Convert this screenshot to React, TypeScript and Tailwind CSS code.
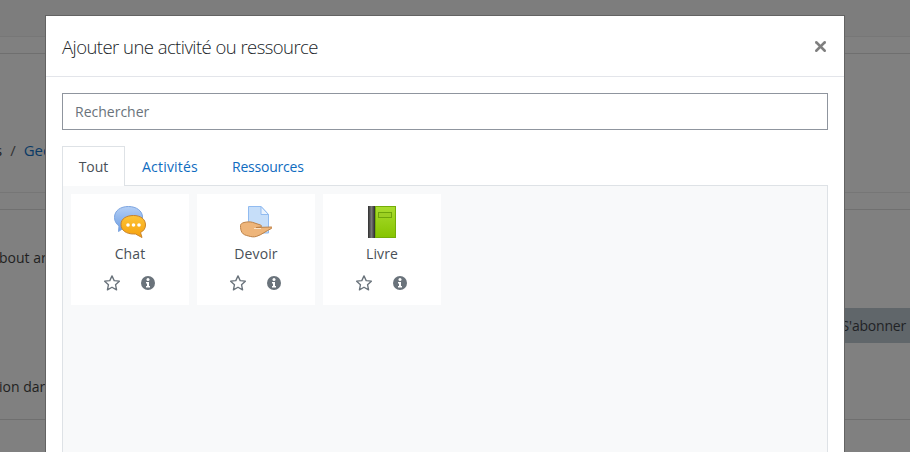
import React from "react";
import { X } from "lucide-react";

const font = { fontFamily: '"Open Sans", "Noto Sans", sans-serif' };

function ChatIcon() {
  return (
    <svg width="32" height="32" viewBox="0 0 32 32">
      <defs>
        <linearGradient id="chatBlue" x1="0" y1="0" x2="0" y2="1">
          <stop offset="0" stopColor="#b4cff5" />
          <stop offset="1" stopColor="#6c9de3" />
        </linearGradient>
        <linearGradient id="chatOrange" x1="0" y1="0" x2="0" y2="1">
          <stop offset="0" stopColor="#fdc437" />
          <stop offset="1" stopColor="#f6a00c" />
        </linearGradient>
      </defs>
      <path d="M14.500.5C6.500.5.500 4.500.500 11.500c0 4 2 6.500 4.500 8.500l-.5 5.500 6-4h5c7 0 13-4.500 13-10.500S22.500.5 14.500.5z" fill="url(#chatBlue)" stroke="#7da5e0" />
      <path d="M19.500 9.500c-7 0-12.500 3-12.500 9s5.500 9.500 12.500 9.500h2l6.500 3.500-1.500-5c3-1.500 5-4 5-7.500 0-6-5-9.500-12-9.500z" fill="url(#chatOrange)" stroke="#c8832c" />
      <circle cx="14" cy="19" r="1.800" fill="#fff" />
      <circle cx="19.500" cy="19" r="1.800" fill="#fff" />
      <circle cx="25" cy="19" r="1.800" fill="#fff" />
    </svg>
  );
}

function DevoirIcon() {
  return (
    <svg width="32" height="32" viewBox="0 0 32 32">
      <path d="M8.500.5H21l7.500 8V27h-20z" fill="#c6def9" stroke="#91bbf0" />
      <path d="M21 .5v8h7.500z" fill="#eaf3fe" stroke="#91bbf0" />
      <path d="M.5 19.500c0-1.500 1.500-2.500 3.500-3 3-.8 6-.8 8.500-.2l8 2.700c1.500.5 1.500 2-.5 2.200l-4 .3 15.500-.5c.8 0 .8 1 0 1.400-5 2.300-10 6.500-15 8-3 .9-5 .4-8-.4-3-.7-5-1.300-6.500-3.500-1.300-2-1.500-4.500-1.500-7z" fill="#eeb57a" stroke="#bd8248" />
      <path d="M14 22.500h7" stroke="#fbe3c8" strokeWidth="1" />
    </svg>
  );
}

function LivreIcon() {
  return (
    <svg width="28" height="32" viewBox="0 0 28 32">
      <defs>
        <linearGradient id="bookSpine" x1="0" y1="0" x2="1" y2="0">
          <stop offset="0" stopColor="#2f2f2f" />
          <stop offset="0.5" stopColor="#777" />
          <stop offset="1" stopColor="#2a2a2a" />
        </linearGradient>
        <linearGradient id="bookCover" x1="0" y1="0" x2="0" y2="1">
          <stop offset="0" stopColor="#a9dc2e" />
          <stop offset="1" stopColor="#86c400" />
        </linearGradient>
      </defs>
      <rect x="0" y="0" width="7" height="32" fill="url(#bookSpine)" />
      <rect x="7.500" y="0.500" width="20" height="31" fill="url(#bookCover)" stroke="#74ad08" />
      <rect x="10.500" y="6.500" width="13" height="5" fill="#9ccf22" stroke="#6fa50a" />
    </svg>
  );
}

function StarOutline() {
  return (
    <svg width="18" height="18" viewBox="0 0 24 24" fill="none" stroke="#6a737b" strokeWidth="1.800" strokeLinejoin="round">
      <path d="M12 2.500l2.900 6.300 6.900.8-5.100 4.700 1.400 6.800L12 17.700l-6.100 3.400 1.400-6.800L2.200 9.600l6.900-.8z" />
    </svg>
  );
}

function InfoCircle() {
  return (
    <svg width="14" height="14" viewBox="0 0 14 14">
      <circle cx="7" cy="7" r="7" fill="#6a737b" />
      <circle cx="7" cy="3.500" r="1.500" fill="#fff" />
      <path d="M5 6h3v4h1v1.500H5V10h1V7.500H5z" fill="#fff" />
    </svg>
  );
}

function ActivityCard({ name, icon }: { name: string; icon: React.ReactNode }) {
  return (
    <div className="flex h-[111px] w-[118px] flex-col items-center bg-white">
      <div className="flex h-[44px] items-end justify-center">{icon}</div>
      <div className="mt-[5px] text-[14px] leading-[21px] tracking-[0.1px] text-[#495057]">{name}</div>
      <div className="mt-[10px] flex items-center gap-[20px] pr-[2px]">
        <StarOutline />
        <InfoCircle />
      </div>
    </div>
  );
}

export default function App() {
  return (
    <div className="relative h-[452px] w-[910px] overflow-hidden bg-[#808080] text-[14px] text-[#1d2125]" style={font}>
      {/* Page behind the backdrop */}
      <div className="h-[37px] border-b border-[#777777] bg-[#7d7d7d]" />
      <div className="h-[17px] border-b border-[#6f6f6f]" />
      <div className="flex h-[139px] items-end border-b border-[#767676]">
        <div className="pb-[31px] text-[15px] leading-[21px]">
          <span className="ml-[-5px]">s</span>
          <span className="mx-[8px] text-[#333]">/</span>
          <span className="text-[#0a3a66]">Geo</span>
        </div>
      </div>
      <div className="h-[17px] border-b border-[#707070]" />
      <div className="flex h-[210px] flex-col border-b border-[#6f6f6f]">
        <div className="mt-[37px] text-[14px] leading-[22px] text-[#1f1f1f]">
          <span className="ml-[-1px]">bout ar</span>
        </div>
        <div className="mt-[39px] flex h-[35px] justify-end">
          <div className="flex w-[69px] items-center justify-end bg-[#60666a] pr-[4px] text-[14px] tracking-[-0.2px] whitespace-nowrap text-[#1f2225]">
            S'abonner
          </div>
        </div>
        <div className="mt-[33px] text-[14px] leading-[22px] text-[#1f1f1f]">
          <span className="ml-[-1px]">ion dar</span>
        </div>
      </div>

      {/* Modal */}
      <div className="absolute top-[15px] left-[45px] w-[800px] border border-[#636363] bg-white">
        <div className="flex h-[61px] items-center justify-between border-b border-[#e3e5ea] pr-[15px] pl-[16px]">
          <h5 className="pt-[2px] text-[18.5px] leading-[28px] font-light tracking-[-0.55px] text-[#212529]">Ajouter une activité ou ressource</h5>
          <X size={17} strokeWidth={3.5} className="text-[#7f7f7f]" />
        </div>
        <div className="px-[16px] pt-[16px]">
          <div className="flex h-[37px] items-center border border-[#8f959e] pl-[12px] text-[14px] text-[#6a737b]">Rechercher</div>
          <div className="mt-[16px] flex h-[40px] border-b border-[#dee2e6]">
            <div className="z-10 flex h-[40px] w-[63px] items-center justify-center border-x border-t border-[#dee2e6] bg-white text-[#495057]">Tout</div>
            <div className="flex h-[39px] items-center px-[17px] pt-[2px] tracking-[0.2px] text-[#0f6cbf]">Activités</div>
            <div className="flex h-[39px] items-center px-[17px] pt-[2px] tracking-[-0.2px] text-[#0f6cbf]">Ressources</div>
          </div>
          <div className="flex h-[300px] gap-[8px] border-x border-[#dee2e6] bg-[#f8f9fa] px-[8px] pt-[8px]">
            <ActivityCard name="Chat" icon={<ChatIcon />} />
            <ActivityCard name="Devoir" icon={<DevoirIcon />} />
            <ActivityCard name="Livre" icon={<LivreIcon />} />
          </div>
        </div>
      </div>
    </div>
  );
}
